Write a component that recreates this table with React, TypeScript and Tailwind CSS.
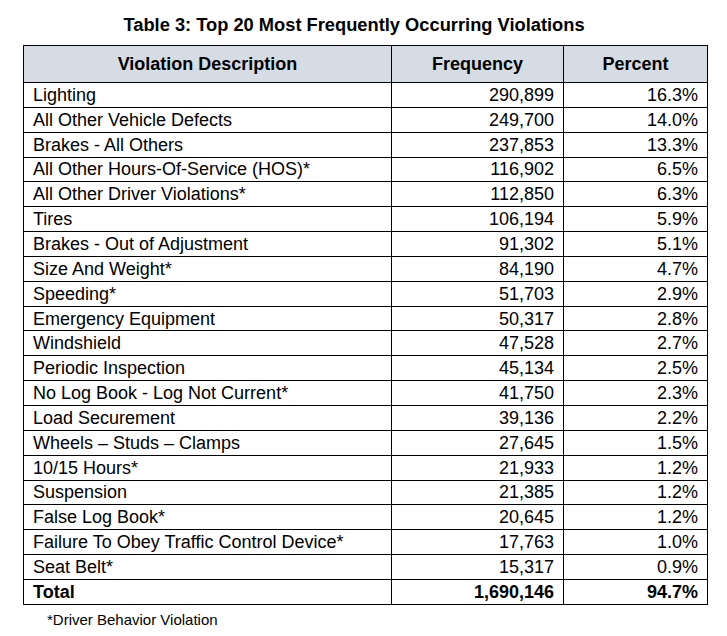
import React from "react";

type Row = { desc: string; freq: string; pct: string };

const rows: Row[] = [
    { desc: "Lighting", freq: "290,899", pct: "16.3%" },
    { desc: "All Other Vehicle Defects", freq: "249,700", pct: "14.0%" },
    { desc: "Brakes - All Others", freq: "237,853", pct: "13.3%" },
    { desc: "All Other Hours-Of-Service (HOS)*", freq: "116,902", pct: "6.5%" },
    { desc: "All Other Driver Violations*", freq: "112,850", pct: "6.3%" },
    { desc: "Tires", freq: "106,194", pct: "5.9%" },
    { desc: "Brakes - Out of Adjustment", freq: "91,302", pct: "5.1%" },
    { desc: "Size And Weight*", freq: "84,190", pct: "4.7%" },
    { desc: "Speeding*", freq: "51,703", pct: "2.9%" },
    { desc: "Emergency Equipment", freq: "50,317", pct: "2.8%" },
    { desc: "Windshield", freq: "47,528", pct: "2.7%" },
    { desc: "Periodic Inspection", freq: "45,134", pct: "2.5%" },
    { desc: "No Log Book - Log Not Current*", freq: "41,750", pct: "2.3%" },
    { desc: "Load Securement", freq: "39,136", pct: "2.2%" },
    { desc: "Wheels \u2013 Studs \u2013 Clamps", freq: "27,645", pct: "1.5%" },
    { desc: "10/15 Hours*", freq: "21,933", pct: "1.2%" },
    { desc: "Suspension", freq: "21,385", pct: "1.2%" },
    { desc: "False Log Book*", freq: "20,645", pct: "1.2%" },
    { desc: "Failure To Obey Traffic Control Device*", freq: "17,763", pct: "1.0%" },
    { desc: "Seat Belt*", freq: "15,317", pct: "0.9%" },
];

const App = () => {
    return (
        <div className="w-[727px] h-[636px] bg-white text-black font-['Liberation_Sans',Arial,sans-serif]">
            <div className="pt-[14px] pl-[23px] w-[707px]">
                <h1 className="text-center text-[18.3px] font-bold leading-[22px] pr-[22px]">
                    Table 3: Top 20 Most Frequently Occurring Violations
                </h1>
                <table className="mt-[9px] border-collapse table-fixed w-[684px] border border-black">
                    <colgroup>
                        <col className="w-[368px]" />
                        <col className="w-[172px]" />
                        <col className="w-[144px]" />
                    </colgroup>
                    <thead>
                        <tr className="bg-[#d6dce4] h-[37px]">
                            <th className="border border-black text-[18px] font-bold text-center p-0">
                                Violation Description
                            </th>
                            <th className="border border-black text-[18px] font-bold text-center p-0">
                                Frequency
                            </th>
                            <th className="border border-black text-[18px] font-bold text-center p-0">
                                Percent
                            </th>
                        </tr>
                    </thead>
                    <tbody>
                        {rows.map((row) => (
                            <tr key={row.desc} className="h-[24.85px]">
                                <td className="border border-black text-[18px] leading-[20px] pl-[9px] py-0">
                                    {row.desc}
                                </td>
                                <td className="border border-black text-[18px] leading-[20px] text-right pr-[9px] py-0">
                                    {row.freq}
                                </td>
                                <td className="border border-black text-[18px] leading-[20px] text-right pr-[9px] py-0">
                                    {row.pct}
                                </td>
                            </tr>
                        ))}
                        <tr className="h-[24.85px] font-bold">
                            <td className="border border-black text-[18px] leading-[20px] pl-[9px] py-0">
                                Total
                            </td>
                            <td className="border border-black text-[18px] leading-[20px] text-right pr-[9px] py-0">
                                1,690,146
                            </td>
                            <td className="border border-black text-[18px] leading-[20px] text-right pr-[9px] py-0">
                                94.7%
                            </td>
                        </tr>
                    </tbody>
                </table>
                <p className="mt-[6px] pl-[24px] text-[15px] leading-[18px]">
                    *Driver Behavior Violation
                </p>
            </div>
        </div>
    );
};

export default App;
